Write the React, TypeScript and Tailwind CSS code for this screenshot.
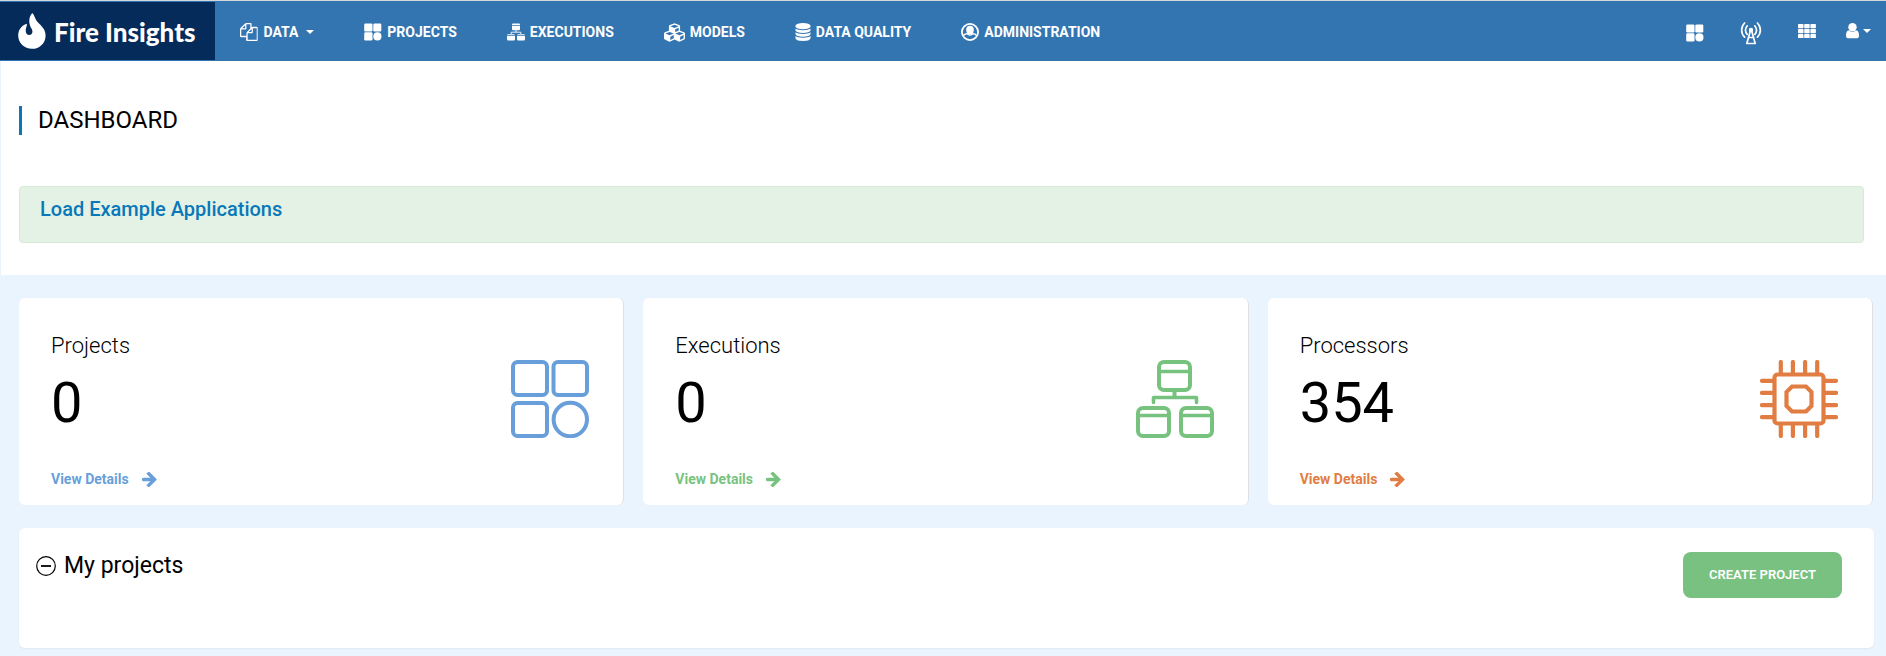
import type { ReactNode } from "react";
import { FaCubes } from "react-icons/fa";

function FlameLogo() {
  return (
    <svg viewBox="0 0 28 36" className="h-9 w-7" fill="#fff" aria-hidden="true">
      <path d="M14.3 0C16.2 1.6 16.6 4.4 18.2 7.2C20.8 11.4 27.6 14.4 27.6 22.4C27.6 30.2 21.6 35.8 14 35.8C6.4 35.8 .2 30.2 .2 22.6C.2 17 3.4 12.4 8.8 10.8C9.2 12.4 8.2 13.8 7.8 16C7.4 19.4 8.6 21.8 11 22C14.2 22.2 15.4 19 13.6 15.8C10.8 11.4 10 4.4 14.3 0Z" />
    </svg>
  );
}

function Caret() {
  return (
    <svg viewBox="0 0 8 4" className="h-1 w-2" fill="currentColor" aria-hidden="true">
      <path d="M0 0h8L4 4Z" />
    </svg>
  );
}

function ArrowIcon() {
  return (
    <svg viewBox="0 0 15 15" className="size-[15px]" fill="none" stroke="currentColor" strokeWidth="3.4" aria-hidden="true">
      <path d="M1.6 7.5H12" strokeLinecap="round" />
      <path d="M6.8 1.8l5.7 5.7-5.7 5.7" strokeLinecap="square" />
    </svg>
  );
}

function CopyIcon() {
  return (
    <svg viewBox="0 0 1792 1792" className="size-[18px]" fill="currentColor" aria-hidden="true">
      <path d="M1664 384q40 0 68 28t28 68v1216q0 40-28 68t-68 28H704q-40 0-68-28t-28-68v-288H96q-40 0-68-28t-28-68V640q0-40 20-88t48-76L476 68q28-28 76-48t88-20h416q40 0 68 28t28 68v328q68-40 128-40h416zM1152 597L853 896h299V597zM512 213L213 512h299V213zm196 647l316-316V128H640v416q0 40-28 68t-68 28H128v640h512v-256q0-40 20-88t48-76zm956 804V512h-384v416q0 40-28 68t-68 28H768v640h896z" />
    </svg>
  );
}

function TilesIcon() {
  return (
    <svg viewBox="0 0 18 18" className="size-[18px]" fill="currentColor" aria-hidden="true">
      <rect x="0.2" y="0.5" width="8.3" height="8" rx="1.3" />
      <rect x="9.3" y="0.5" width="8" height="8" rx="1.3" />
      <rect x="0.2" y="9.3" width="8.3" height="8.3" rx="1.3" />
      <circle cx="13.4" cy="13.4" r="4.1" />
    </svg>
  );
}

function FlowIcon() {
  return (
    <svg viewBox="0 0 18 18" className="size-[18px]" fill="currentColor" aria-hidden="true">
      <path d="M6 .5h6q1 0 1 1V2H5v-.5q0-1 1-1ZM5 2.8h8V6q0 1.2-1.2 1.2H6.2Q5 7.2 5 6Z" />
      <path d="M9 7v2.2M4.200 11V9.200h9.600V11" fill="none" stroke="currentColor" strokeWidth="0.9" />
      <path d="M1.5 11.2h5q1.5 0 1.5 1H0q0-1 1.5-1ZM0 12.9h8v3.3q0 1.3-1.3 1.3H1.3Q0 17.5 0 16.2Z" />
      <path d="M11.5 11.2h5q1.5 0 1.5 1h-8q0-1 1.5-1ZM10 12.9h8v3.3q0 1.3-1.3 1.3h-5.4q-1.3 0-1.3-1.3Z" />
    </svg>
  );
}

function DatabaseIcon() {
  return (
    <svg viewBox="0 0 16 18" className="h-[18px] w-4" fill="currentColor" aria-hidden="true">
      <path d="M.5 2.8Q1.5 0 8 0t7.5 2.8v1Q14.5 6.2 8 6.2T.5 3.8Z" />
      <path d="M.5 5.5q2 1.7 7.5 1.7t7.5-1.7v2Q14.5 9.9 8 9.9T.5 7.5Z" />
      <path d="M.5 9.3q2 1.7 7.5 1.7t7.5-1.7v2q-1 2.4-7.5 2.4T.5 11.3Z" />
      <path d="M.5 13.1q2 1.7 7.5 1.7t7.5-1.7v2.3q-1 2.5-7.5 2.5T.5 15.4Z" />
    </svg>
  );
}

function AdminIcon() {
  return (
    <svg viewBox="0 0 18 18" className="size-[18px]" aria-hidden="true">
      <circle cx="9" cy="9" r="8.1" fill="none" stroke="currentColor" strokeWidth="1.8" />
      <ellipse cx="9" cy="7" rx="3.8" ry="4.2" fill="currentColor" />
      <path d="M2.2 12.8q1-1.800 3.600-2.200Q7.300 12 9 12t3.200-1.400q2.600.4 3.600 2.200" fill="none" stroke="currentColor" strokeWidth="1.4" />
    </svg>
  );
}

function AntennaIcon() {
  return (
    <svg viewBox="0 0 22 24" className="h-6 w-[22px]" fill="none" stroke="currentColor" strokeWidth="1.7" strokeLinecap="round" aria-hidden="true">
      <path d="M4.6 2a10 10 0 0 0 0 14.2M17.4 2a10 10 0 0 1 0 14.2M7.2 4.8a6.2 6.2 0 0 0 0 8.6M14.8 4.8a6.2 6.2 0 0 1 0 8.6" />
      <circle cx="11" cy="9" r="2.2" fill="currentColor" stroke="none" />
      <path d="M10.3 10 6.8 22.5h8.4L11.7 10M9 16.5h4" strokeLinejoin="round" />
    </svg>
  );
}

function GridIcon() {
  return (
    <svg viewBox="0 0 18 14" className="h-3.5 w-[18px]" fill="currentColor" aria-hidden="true">
      {[0, 5, 10].map((y) =>
        [0, 6.2, 12.4].map((x) => <rect key={`${x}-${y}`} x={x} y={y} width="5.5" height="4.2" rx="0.7" />),
      )}
    </svg>
  );
}

function UserIcon() {
  return (
    <svg viewBox="0 0 13 16" className="h-4 w-[13px]" fill="currentColor" aria-hidden="true">
      <circle cx="6.5" cy="4.3" r="4.2" />
      <path d="M3 7.2q1.5 1.7 3.5 1.7T10 7.2q3 .5 3 5.3Q13 15.3 11 15.3H2q-2 0-2-2.8 0-4.8 3-5.3Z" />
    </svg>
  );
}

function ProjectsArt() {
  return (
    <svg viewBox="0 0 78 78" className="size-[78px]" fill="none" stroke="currentColor" strokeWidth="4" aria-hidden="true">
      <rect x="2" y="2" width="34" height="33" rx="4.5" />
      <rect x="42.5" y="2" width="33.5" height="33" rx="4.5" />
      <rect x="2" y="43" width="34" height="33" rx="4.5" />
      <circle cx="59.3" cy="59.5" r="16.7" />
    </svg>
  );
}

function ExecutionsArt() {
  return (
    <svg viewBox="0 0 78 78" className="size-[78px]" fill="none" stroke="currentColor" strokeWidth="4" aria-hidden="true">
      <rect x="23" y="2" width="31" height="28" rx="5" />
      <rect x="2" y="48" width="31" height="28" rx="5" />
      <rect x="45" y="48" width="31" height="28" rx="5" />
      <path d="M23 11.5h31M2 55.5h31M45 55.5h31" strokeWidth="3.6" />
      <path d="M38.5 31v6.5" />
      <path d="M17.5 42.5V37.5h43v5" strokeWidth="3.6" strokeLinecap="round" strokeLinejoin="round" />
    </svg>
  );
}

function ProcessorsArt() {
  return (
    <svg viewBox="0 0 78 78" className="size-[78px]" fill="none" stroke="currentColor" strokeWidth="4.2" strokeLinecap="round" aria-hidden="true">
      <rect x="14.5" y="14.5" width="49" height="49" rx="3" />
      <path d="M32 26.5h14l5.5 5.5v14L46 51.5H32L26.5 46V32Z" />
      <path d="M20.8 2v11M32.9 2v11M45.1 2v11M57.2 2v11M20.8 65v11M32.9 65v11M45.1 65v11M57.2 65v11M2 20.8h11M2 32.9h11M2 45.1h11M2 57.2h11M65 20.8h11M65 32.9h11M65 45.1h11M65 57.2h11" />
    </svg>
  );
}

const navItems: { label: string; icon: ReactNode; caret?: boolean }[] = [
  { label: "DATA", icon: <CopyIcon />, caret: true },
  { label: "PROJECTS", icon: <TilesIcon /> },
  { label: "EXECUTIONS", icon: <FlowIcon /> },
  { label: "MODELS", icon: <FaCubes className="size-[21px]" /> },
  { label: "DATA QUALITY", icon: <DatabaseIcon /> },
  { label: "ADMINISTRATION", icon: <AdminIcon /> },
];

const stats = [
  { label: "Projects", value: 0, color: "text-[#689fda]", art: <ProjectsArt /> },
  { label: "Executions", value: 0, color: "text-[#78c280]", art: <ExecutionsArt /> },
  { label: "Processors", value: 354, color: "text-[#e17d42]", art: <ProcessorsArt /> },
];

export default function App() {
  return (
    <div className="min-h-screen bg-[#e9f4ff] font-['Roboto',sans-serif] text-black">
      <header className="flex h-[61px] items-stretch border-t border-[#d4d7da] bg-[#3375b1] text-white">
        <a href="#home" className="my-px flex items-center bg-[#052b5b] pr-5 pl-[18px]">
          <FlameLogo />
          <span className="ml-2 pt-0.5 font-['Lato',sans-serif] text-[26px] leading-8 font-black">Fire Insights</span>
        </a>
        <nav className="ml-[25px] flex items-center gap-[50px] pt-0.5">
          {navItems.map((item) => (
            <a key={item.label} href={`#${item.label.toLowerCase().replace(" ", "-")}`} className="flex items-center gap-[5px] text-sm font-bold">
              {item.icon}
              {item.label}
              {item.caret && <span className="pl-[3px]"><Caret /></span>}
            </a>
          ))}
        </nav>
        <div className="ml-auto flex items-center gap-9 pt-1 pr-[15px]">
          <button type="button" aria-label="Apps"><TilesIcon /></button>
          <button type="button" aria-label="Broadcast"><AntennaIcon /></button>
          <button type="button" aria-label="Menu" className="pb-1"><GridIcon /></button>
          <button type="button" aria-label="Account" className="-ml-1.5 flex items-center gap-1 pb-1">
            <UserIcon />
            <Caret />
          </button>
        </div>
      </header>

      <section className="ml-px bg-white pt-[45px] pr-[22px] pb-8 pl-[18px]">
        <h1 className="border-l-3 border-[#0a78b8] pl-4 text-2xl leading-[29px]">DASHBOARD</h1>
        <div className="mt-[51px] h-[57px] rounded-sm border border-[#d5ebd5] bg-[#e4f2e5] px-5 pt-2">
          <a href="#examples" className="text-xl leading-7 font-medium text-[#0a78b8]">Load Example Applications</a>
        </div>
      </section>

      <main className="pr-3 pb-2 pl-[19px]">
        <div className="grid grid-cols-3 gap-[19px] pt-[23px] pr-px">
          {stats.map((stat) => (
            <article key={stat.label} className="flex h-[207px] justify-between rounded-md border-r border-[#dde1e6] bg-white pr-[34px] pl-8">
              <div className="flex flex-col items-start pt-8">
                <h2 className="text-[22px] leading-8 font-light">{stat.label}</h2>
                <p className="mt-2 text-[56px] leading-[66px]">{stat.value}</p>
                <a href={`#${stat.label.toLowerCase()}`} className={`mt-[33px] flex items-center gap-[13px] text-sm font-bold ${stat.color}`}>
                  View Details
                  <ArrowIcon />
                </a>
              </div>
              <div className={`pt-[62px] ${stat.color}`}>{stat.art}</div>
            </article>
          ))}
        </div>

        <section className="mt-[23px] flex h-[120px] items-start justify-between rounded-md bg-white pt-6 pr-8 pl-[17px] shadow-xs">
          <h2 className="flex items-center gap-2 text-[23px] leading-7">
            <svg viewBox="0 0 20 20" className="size-5" fill="none" stroke="currentColor" aria-hidden="true">
              <circle cx="10" cy="10" r="9.3" strokeWidth="1.200" />
              <path d="M5 10h10" strokeWidth="1.8" />
            </svg>
            My projects
          </h2>
          <button type="button" className="h-[46px] rounded-lg bg-[#79c180] px-[26px] text-[13px] font-semibold text-white">CREATE PROJECT</button>
        </section>
      </main>
    </div>
  );
}
